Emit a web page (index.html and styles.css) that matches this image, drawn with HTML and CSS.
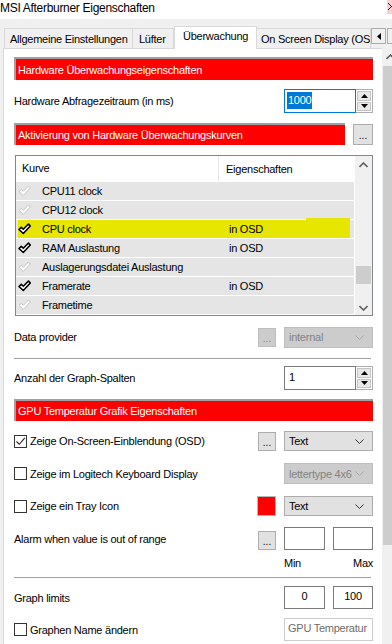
FILE: index.html
```html
<!DOCTYPE html>
<html>
<head>
<meta charset="utf-8">
<title>MSI Afterburner Eigenschaften</title>
<link rel="stylesheet" href="styles.css">
</head>
<body>
<div class="titlebar">
	<span class="title">MSI Afterburner Eigenschaften</span>
	<span class="close"><svg width="10" height="13" viewBox="0 0 10 13"><path d="M2 3 L9 10 M9 3 L2 10" stroke="#222" stroke-width="1"/></svg></span>
</div>
<div class="tabstrip">
	<div class="tab t1">Allgemeine Einstellungen</div>
	<div class="tab t2">Lüfter</div>
	<div class="tab t3 active">Überwachung</div>
	<div class="tab t4">On Screen Display (OSD)</div>
	<div class="tabscroll">
		<span class="tsbtn"><svg width="4" height="7" viewBox="0 0 4 7"><path d="M4 0 L0 3.5 L4 7 Z" fill="#000"/></svg></span>
		<span class="tsbtn"><svg width="4" height="7" viewBox="0 0 4 7"><path d="M0 0 L4 3.5 L0 7 Z" fill="#000"/></svg></span>
	</div>
</div>
<div class="window">
	<div class="panel">
		<div class="redbar first">Hardware Überwachungseigenschaften</div>

		<div class="row r-poll">
			<span class="label">Hardware Abfragezeitraum (in ms)</span>
			<div class="spin focused">
				<div class="spinval"><span class="sel">1000</span></div>
				<div class="spinbtns">
					<b><svg width="7" height="4" viewBox="0 0 7 4"><path d="M0 4 L3.5 0 L7 4 Z" fill="#000"/></svg></b>
					<b><svg width="7" height="4" viewBox="0 0 7 4"><path d="M0 0 L7 0 L3.5 4 Z" fill="#000"/></svg></b>
				</div>
			</div>
		</div>

		<div class="row r-curves">
			<div class="redbar grow">Aktivierung von Hardware Überwachungskurven</div>
			<span class="dots big">...</span>
		</div>

		<div class="list">
			<div class="listmain">
				<div class="lhead"><span class="c1">Kurve</span><span class="c2">Eigenschaften</span></div>
				<div class="lrow"><span class="chk off"></span><span class="c1">CPU11 clock</span><span class="c2"></span></div>
				<div class="lrow"><span class="chk off"></span><span class="c1">CPU12 clock</span><span class="c2"></span></div>
				<div class="lrow hl"><span class="chk on"></span><span class="c1">CPU clock</span><span class="c2">in OSD</span></div>
				<div class="lrow"><span class="chk on"></span><span class="c1">RAM Auslastung</span><span class="c2">in OSD</span></div>
				<div class="lrow"><span class="chk off"></span><span class="c1">Auslagerungsdatei Auslastung</span><span class="c2"></span></div>
				<div class="lrow"><span class="chk on"></span><span class="c1">Framerate</span><span class="c2">in OSD</span></div>
				<div class="lrow"><span class="chk off"></span><span class="c1">Frametime</span><span class="c2"></span></div>
				<div class="lrow"></div>
			</div>
			<div class="lscroll">
				<svg class="arr" width="9" height="6" viewBox="0 0 9 6"><path d="M0.5 5 L4.5 1 L8.5 5" stroke="#606060" stroke-width="1.6" fill="none"/></svg>
				<div class="lthumb"></div>
				<svg class="arr" width="9" height="6" viewBox="0 0 9 6"><path d="M0.5 1 L4.5 5 L8.5 1" stroke="#606060" stroke-width="1.6" fill="none"/></svg>
			</div>
		</div>

		<div class="row r-provider">
			<span class="label">Data provider</span>
			<div class="ctrls">
				<span class="dots disabled">...</span>
				<div class="combo disabled"><span>internal</span><svg width="9" height="5" viewBox="0 0 9 5"><path d="M0.5 0.5 L4.5 4.5 L8.5 0.5" stroke="#a8a8a8" fill="none"/></svg></div>
			</div>
		</div>

		<div class="sep s1"></div>

		<div class="row r-cols">
			<span class="label">Anzahl der Graph-Spalten</span>
			<div class="spin">
				<div class="spinval">1</div>
				<div class="spinbtns">
					<b><svg width="7" height="4" viewBox="0 0 7 4"><path d="M0 4 L3.5 0 L7 4 Z" fill="#000"/></svg></b>
					<b><svg width="7" height="4" viewBox="0 0 7 4"><path d="M0 0 L7 0 L3.5 4 Z" fill="#000"/></svg></b>
				</div>
			</div>
		</div>

		<div class="redbar r-gpu">GPU Temperatur Grafik Eigenschaften</div>

		<div class="row r-osd">
			<label class="check"><span class="box"><svg width="11" height="11" viewBox="0 0 11 11"><path d="M1.5 5.5 L4.3 8.3 L9.8 1.8" stroke="#222" stroke-width="1.1" fill="none"/></svg></span>Zeige On-Screen-Einblendung (OSD)</label>
			<div class="ctrls">
				<span class="dots">...</span>
				<div class="combo"><span>Text</span><svg width="9" height="5" viewBox="0 0 9 5"><path d="M0.5 0.5 L4.5 4.5 L8.5 0.5" stroke="#333" fill="none"/></svg></div>
			</div>
		</div>

		<div class="row r-logi">
			<label class="check"><span class="box"></span>Zeige im Logitech Keyboard Display</label>
			<div class="ctrls">
				<div class="combo disabled"><span>lettertype 4x6</span><svg width="9" height="5" viewBox="0 0 9 5"><path d="M0.5 0.5 L4.5 4.5 L8.5 0.5" stroke="#a8a8a8" fill="none"/></svg></div>
			</div>
		</div>

		<div class="row r-tray">
			<label class="check"><span class="box"></span>Zeige ein Tray Icon</label>
			<div class="ctrls">
				<span class="swatch"></span>
				<div class="combo"><span>Text</span><svg width="9" height="5" viewBox="0 0 9 5"><path d="M0.5 0.5 L4.5 4.5 L8.5 0.5" stroke="#333" fill="none"/></svg></div>
			</div>
		</div>

		<div class="row r-alarm">
			<span class="label">Alarm when value is out of range</span>
			<div class="ctrls">
				<span class="dots low">...</span>
				<span class="field w41"></span>
				<span class="field w40"></span>
			</div>
		</div>
		<div class="minmax"><span>Min</span><span>Max</span></div>

		<div class="sep s2"></div>

		<div class="row r-limits">
			<span class="label">Graph limits</span>
			<div class="ctrls">
				<span class="field w41">0</span>
				<span class="field w40">100</span>
			</div>
		</div>

		<div class="row r-name">
			<label class="check"><span class="box"></span>Graphen Name ändern</label>
			<div class="ctrls">
				<span class="field wide disabled">GPU Temperatur</span>
			</div>
		</div>
	</div>
	<div class="vscroll">
		<svg class="arr" width="9" height="6" viewBox="0 0 9 6"><path d="M0.5 5 L4.5 1 L8.5 5" stroke="#606060" stroke-width="1.6" fill="none"/></svg>
		<div class="vthumb"></div>
	</div>
</div>
</body>
</html>
```

FILE: styles.css
```css
html, body{
	margin: 0;
	padding: 0;
}
body{
	width: 392px;
	height: 644px;
	overflow: hidden;
	background: #f0f0f0;
	font-family: "Liberation Sans", Arial, sans-serif;
	font-size: 11px;
	letter-spacing: -0.25px;
	color: #000;
}
.titlebar{
	height: 19px;
	background: #fff;
	display: flex;
	justify-content: space-between;
}
.title{
	line-height: 17px;
	font-size: 12px;
	letter-spacing: -0.3px;
}
.close{
	width: 5px;
	height: 14px;
	overflow: hidden;
	background: #f6d3d3;
	display: flex;
	justify-content: flex-start;
}
.close svg{
	flex: none;
	margin-left: -1px;
}

/* tabs */
.tabstrip{
	height: 29px;
	display: flex;
	align-items: flex-end;
	padding-left: 4px;
	position: relative;
	z-index: 2;
}
.tab{
	height: 20px;
	line-height: 20px;
	box-sizing: border-box;
	border: 1px solid #d9d9d9;
	border-bottom: none;
	background: #f0f0f0;
	white-space: nowrap;
	overflow: hidden;
	flex: none;
}
.t1{ width: 129px; padding-left: 5px; }
.t2{ width: 41px; padding-left: 6px; border-left: none; }
.t3{ width: 83px; padding-left: 8px; }
.t4{ width: 114px; padding-left: 4px; border-left: none; }
.tab.active{
	height: 23px;
	line-height: 18px;
	margin-bottom: -1px;
	background: #fff;
}
.tabscroll{
	align-self: flex-start;
	margin-top: 9px;
	display: flex;
	gap: 1px;
	flex: none;
}
.tsbtn{
	width: 13px;
	height: 14px;
	border: 1px solid #adadad;
	background: #f0f0f0;
	display: flex;
	align-items: center;
	justify-content: center;
}

/* main window */
.window{
	display: flex;
	height: 596px;
}
.panel{
	flex: none;
	width: 379px;
	margin-left: 3px;
	box-sizing: border-box;
	border-left: 1px solid #d9d9d9;
	border-top: 1px solid #d9d9d9;
	background: #fff;
	padding: 0 9px 0 10px;
}
.vscroll{
	flex: none;
	width: 17px;
	background: #f0f0f0;
	display: flex;
	flex-direction: column;
	align-items: center;
}
.vscroll .arr{
	margin-top: 6px;
}
.vthumb{
	margin-top: 6px;
	width: 15px;
	height: 479px;
	background: #cdcdcd;
}

.redbar{
	height: 23px;
	box-sizing: border-box;
	background: #ff0000;
	color: #fff;
	border-top: 2px solid #a0a0a0;
	border-left: 2px solid #a0a0a0;
	padding-left: 2px;
	display: flex;
	align-items: center;
	white-space: nowrap;
}
.redbar.first{ margin-top: 8px; }
.redbar.grow{ flex: 1; height: 22px; }
.redbar.r-gpu{ margin-top: 9px; height: 22px; }

.row{
	display: flex;
	align-items: center;
	white-space: nowrap;
}
.label{ flex: 1; }
.r-poll{ margin-top: 9px; height: 24px; }
.r-curves{ margin-top: 10px; height: 22px; gap: 8px; }
.r-provider{ margin-top: 11px; height: 20px; }
.r-cols{ margin-top: 7px; height: 24px; }
.r-osd{ margin-top: 10px; height: 20px; }
.r-logi{ margin-top: 12px; height: 21px; }
.r-tray{ margin-top: 12px; height: 20px; }
.r-alarm{ margin-top: 11px; height: 23px; }
.r-limits{ margin-top: 8px; height: 23px; }
.r-name{ margin-top: 9px; height: 23px; }

.ctrls{
	margin-left: auto;
	display: flex;
	align-items: center;
	gap: 8px;
	height: 100%;
}

/* spin boxes */
.spin{
	display: flex;
	height: 24px;
	width: 89px;
}
.spinval{
	width: 72px;
	box-sizing: border-box;
	border: 1px solid #7a7a7a;
	padding: 2px 0 0 4px;
	line-height: 17px;
}
.spin.focused .spinval{
	border-color: #0078d7;
	padding-left: 2px;
}
.sel{
	background: #0078d7;
	color: #fff;
	display: inline-block;
	padding: 0 1px;
}
.spinbtns{
	width: 17px;
	display: flex;
	flex-direction: column;
	box-sizing: border-box;
	border: 1px solid #adadad;
	border-left: none;
	padding: 1px;
	gap: 1px;
}
.spinbtns b{
	flex: 1;
	background: #e8e8e8;
	border: 1px solid #c4c4c4;
	display: flex;
	align-items: center;
	justify-content: center;
}

/* buttons */
.dots{
	width: 18px;
	height: 19px;
	box-sizing: border-box;
	border: 1px solid #adadad;
	background: #e1e1e1;
	text-align: center;
	font-size: 10px;
	letter-spacing: 0;
	line-height: 20px;
	color: #000;
}
.dots.big{
	width: 20px;
	height: 21px;
	line-height: 22px;
}
.dots.low{ align-self: flex-end; height: 19px; }
.dots.disabled{
	background: #cccccc;
	border-color: #bfbfbf;
	color: #838383;
}
.combo{
	width: 89px;
	height: 20px;
	box-sizing: border-box;
	border: 1px solid #adadad;
	background: #e1e1e1;
	display: flex;
	align-items: center;
	justify-content: space-between;
	padding: 0 8px 0 4px;
}
.combo.disabled{
	background: #cccccc;
	border-color: #bfbfbf;
	color: #838383;
	height: 21px;
}
.swatch{
	width: 19px;
	height: 20px;
	box-sizing: border-box;
	background: #ff0000;
	border: 1px solid #b8b8b8;
}
.field{
	height: 23px;
	box-sizing: border-box;
	border: 1px solid #7a7a7a;
	text-align: center;
	line-height: 19px;
}
.w41{ width: 41px; }
.w40{ width: 40px; }
.field.wide{
	width: 89px;
	text-align: left;
	padding-left: 3px;
}
.field.disabled{
	border-color: #cccccc;
	color: #6d6d6d;
}

.minmax{
	margin-top: 6px;
	height: 14px;
	line-height: 14px;
	margin-left: 270px;
	display: flex;
	justify-content: space-between;
}

.sep{
	height: 1px;
	width: 357px;
	background: #a0a0a0;
}
.s1{ margin-top: 11px; }
.s2{ margin-top: 7px; }

/* checkboxes */
.check{
	display: flex;
	align-items: center;
}
.box{
	width: 13px;
	height: 13px;
	box-sizing: border-box;
	border: 1px solid #333;
	background: #fff;
	margin-right: 3px;
	display: flex;
	align-items: center;
	justify-content: center;
}

/* curve list */
.list{
	margin: 10px 0 0 1px;
	height: 161px;
	box-sizing: border-box;
	border: 1px solid #828790;
	display: flex;
	overflow: hidden;
}
.listmain{
	width: 338px;
	flex: none;
	margin-right: 1px;
}
.lhead{
	height: 25px;
	background: #fff;
	display: flex;
	align-items: center;
	margin-bottom: 1px;
}
.lhead .c1{
	width: 203px;
	box-sizing: border-box;
	padding-left: 6px;
	height: 100%;
	line-height: 25px;
	border-right: 1px solid #e5e5e5;
}
.lhead .c2{
	padding-left: 7px;
}
.lrow{
	height: 18px;
	margin-bottom: 1px;
	background: #e5e5e5;
	display: flex;
	align-items: center;
	white-space: nowrap;
	position: relative;
}
.lrow .c1{
	width: 187px;
	flex: none;
}
.lrow.hl{
	background: linear-gradient(to right, #e5e5e5 2px, #e6e600 2px, #e6e600 334px, #e5e5e5 334px);
}
.lrow.hl::after{
	content: "";
	position: absolute;
	left: 290px;
	top: -2px;
	width: 44px;
	height: 2px;
	background: #e6e600;
}
.chk{
	width: 13px;
	height: 12px;
	margin: 0 11px 0 2px;
	flex: none;
	background-repeat: no-repeat;
}
.chk.on{
	background-image: url("data:image/svg+xml;utf8,<svg xmlns='http://www.w3.org/2000/svg' width='13' height='12' viewBox='0 0 13 12'><path d='M1 6.5 L3.3 4.3 L5.3 6.3 L10.5 1 L12.3 3 L5.3 10.5 Z' fill='white' stroke='black' stroke-width='1.6' stroke-linejoin='round'/></svg>");
}
.chk.off{
	background-image: url("data:image/svg+xml;utf8,<svg xmlns='http://www.w3.org/2000/svg' width='13' height='12' viewBox='0 0 13 12'><path d='M1 6.5 L3.3 4.3 L5.3 6.3 L10.5 1 L12.3 3 L5.3 10.5 Z' fill='white' stroke='%23c4c4c4' stroke-width='1' stroke-linejoin='round'/></svg>");
}
.lscroll{
	width: 17px;
	flex: none;
	background: #f0f0f0;
	display: flex;
	flex-direction: column;
	align-items: center;
}
.lscroll .arr{
	margin-top: 6px;
}
.lthumb{
	width: 15px;
	height: 18px;
	background: #cdcdcd;
	margin-top: 98px;
	margin-bottom: 15px;
}
```
